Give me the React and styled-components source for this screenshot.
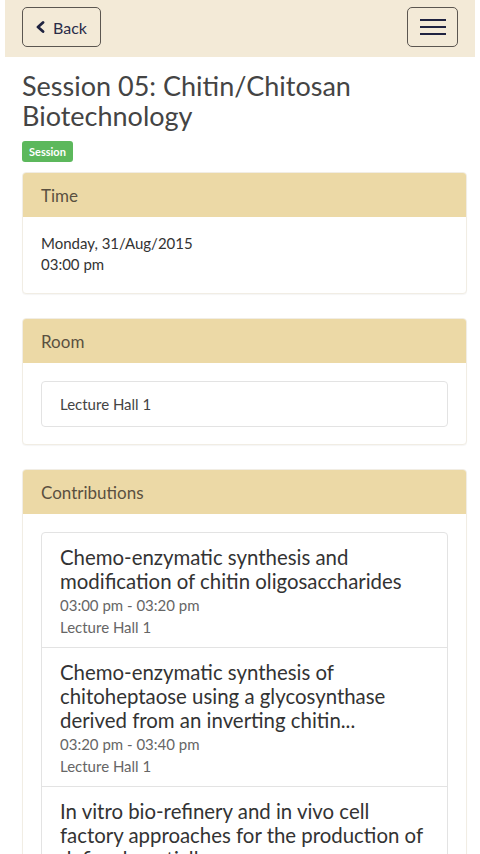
import React from "react";
import styled, { createGlobalStyle } from "styled-components";

const GlobalStyle = createGlobalStyle`
  html, body {
    margin: 0;
    padding: 0;
    background: #fff;
  }
  body {
    font-family: Lato, "Noto Sans", sans-serif;
    color: #333;
  }
`;

const contributions = [
  {
    title: "Chemo-enzymatic synthesis and modification of chitin oligosaccharides",
    time: "03:00 pm - 03:20 pm",
    room: "Lecture Hall 1",
  },
  {
    title: "Chemo-enzymatic synthesis of chitoheptaose using a glycosynthase derived from an inverting chitin...",
    time: "03:20 pm - 03:40 pm",
    room: "Lecture Hall 1",
  },
  {
    title: "In vitro bio-refinery and in vivo cell factory approaches for the production of defined, partiall...",
    time: "03:40 pm - 04:00 pm",
    room: "Lecture Hall 1",
  },
];

const App = () => {
  return (
    <>
      <GlobalStyle />
      <Navbar>
        <NavButton>
          <svg width="11" height="12" viewBox="0 0 11 12">
            <path d="M8 1.5 L3 6 L8 10.5" fill="none" stroke="#1f2340" strokeWidth="2.8" strokeLinecap="round" strokeLinejoin="round" />
          </svg>
          Back
        </NavButton>
        <MenuButton>
          <span />
          <span />
          <span />
        </MenuButton>
      </Navbar>

      <Content>
        <Title>Session 05: Chitin/Chitosan Biotechnology</Title>
        <Badge>Session</Badge>

        <Panel>
          <PanelHeading>Time</PanelHeading>
          <PanelBody>
            <PlainText>Monday, 31/Aug/2015</PlainText>
            <PlainText>03:00 pm</PlainText>
          </PanelBody>
        </Panel>

        <Panel>
          <PanelHeading>Room</PanelHeading>
          <PanelBody $list>
            <ListGroup>
              <RoomItem>Lecture Hall 1</RoomItem>
            </ListGroup>
          </PanelBody>
        </Panel>

        <Panel>
          <PanelHeading>Contributions</PanelHeading>
          <PanelBody $list>
            <ListGroup>
              {contributions.map((c, i) => (
                <ContribItem key={i}>
                  <ContribTitle>{c.title}</ContribTitle>
                  <ContribMeta>{c.time}</ContribMeta>
                  <ContribMeta>{c.room}</ContribMeta>
                </ContribItem>
              ))}
            </ListGroup>
          </PanelBody>
        </Panel>
      </Content>
    </>
  );
};

const Navbar = styled.div`
  margin: 0 5px;
  height: 57px;
  background: #f3ead7;
  display: flex;
  align-items: center;
  justify-content: space-between;
  padding: 0 17px;
  box-sizing: border-box;
`;

const NavButton = styled.button`
  height: 40px;
  width: 79px;
  border: 1px solid #5b5650;
  border-radius: 5px;
  background: transparent;
  display: flex;
  align-items: center;
  gap: 7px;
  padding: 0 12px;
  font-family: Lato, sans-serif;
  font-size: 16px;
  color: #2a2c48;
  margin-top: -3px;
`;

const MenuButton = styled.button`
  height: 40px;
  width: 51px;
  border: 1px solid #5b5650;
  border-radius: 5px;
  background: transparent;
  display: flex;
  flex-direction: column;
  align-items: center;
  justify-content: center;
  gap: 5px;
  margin-top: -3px;

  span {
    display: block;
    width: 26px;
    height: 2px;
    background: #1f2340;
  }
`;

const Content = styled.div`
  padding: 14px 13px 0 22px;
`;

const Title = styled.h1`
  margin: 0;
  font-family: Lato, sans-serif;
  font-weight: 400;
  font-size: 27px;
  line-height: 30px;
  color: #444;
  padding-right: 100px;
`;

const Badge = styled.span`
  display: inline-block;
  margin-top: 10px;
  background: #5cb85c;
  color: #fff;
  font-size: 11px;
  font-weight: 700;
  padding: 4px 7px;
  border-radius: 3px;
  line-height: 13px;
`;

const Panel = styled.div`
  margin-top: 10px;
  margin-bottom: 14px;
  border: 1px solid #f1ede4;
  border-radius: 4px;
  background: #fff;
  box-shadow: 0 1px 1px rgba(0, 0, 0, 0.04);
  overflow: hidden;

  & + & {
    margin-top: 24px;
  }
`;

const PanelHeading = styled.div`
  background: #ecd9a6;
  height: 44px;
  display: flex;
  align-items: center;
  padding: 0 18px;
  font-size: 17px;
  color: #5a5040;
`;

const PanelBody = styled.div`
  padding: ${(p) => (p.$list ? "18px 18px 17px" : "16px 18px 18px")};
`;

const PlainText = styled.div`
  font-size: 15px;
  line-height: 21px;
  color: #333;
`;

const ListGroup = styled.div`
  border: 1px solid #e3e3e3;
  border-radius: 4px;
`;

const RoomItem = styled.div`
  height: 44px;
  display: flex;
  align-items: center;
  padding: 0 18px;
  font-size: 15px;
  color: #444;
`;

const ContribItem = styled.div`
  padding: 12px 18px 9px;

  & + & {
    border-top: 1px solid #e3e3e3;
  }
`;

const ContribTitle = styled.div`
  font-size: 20.4px;
  line-height: 24px;
  color: #333;
  margin-bottom: 1px;
`;

const ContribMeta = styled.div`
  font-size: 15px;
  line-height: 22px;
  color: #666;
`;

export default App;
